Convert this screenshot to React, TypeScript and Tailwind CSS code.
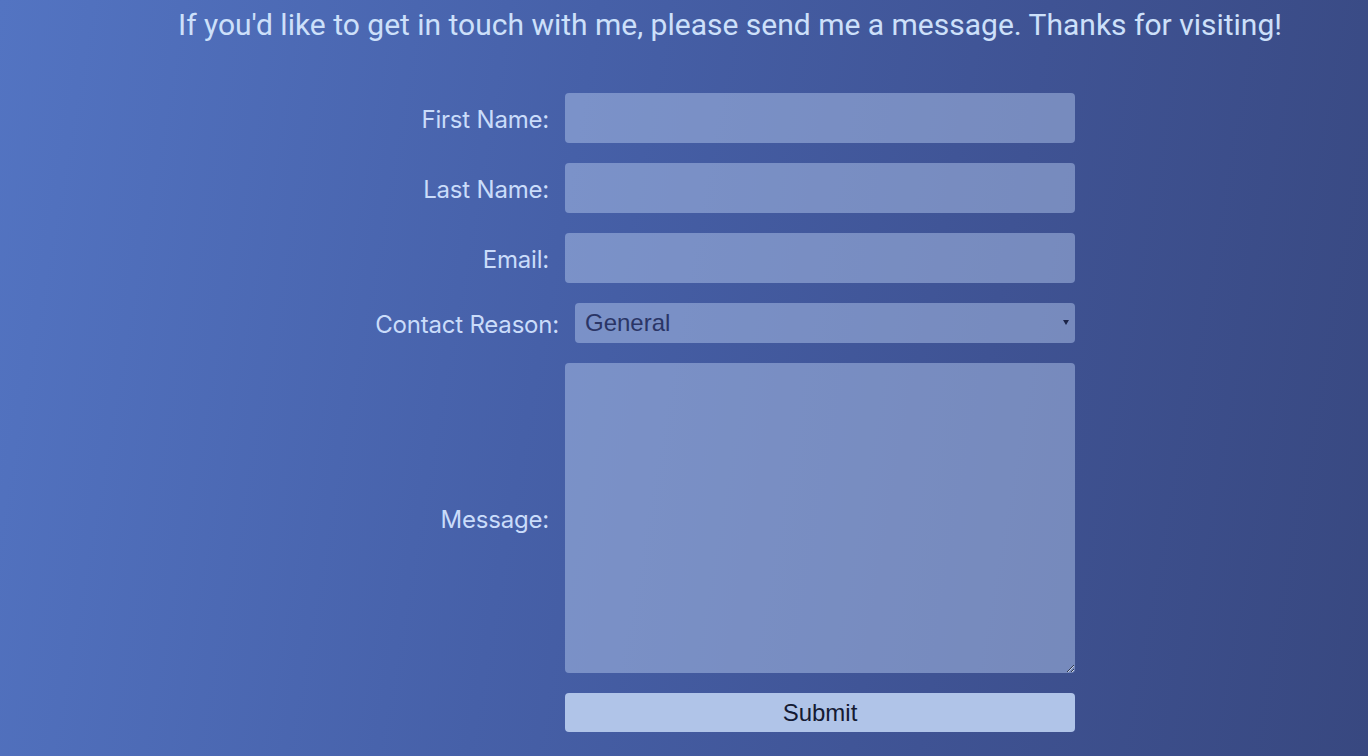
import React from "react";

export default function App() {
  const label =
    "w-[200px] shrink-0 text-right pt-[4px] text-[24px] text-[#cadcfa] font-['Inter','Roboto',sans-serif] tracking-[-0.2px]";
  const input =
    "w-[510px] h-[50px] rounded-[4px] bg-[rgba(176,196,234,0.5)] border-0 outline-none px-3 text-[20px] text-[#1e2850]";
  return (
    <div className="min-h-[756px] w-full bg-[linear-gradient(100deg,#5374c2_0%,#4660a8_40%,#3f5394_70%,#384880_100%)] font-['Roboto',sans-serif] overflow-hidden">
      <div className="pl-[92px] flex justify-center pt-[5px]">
        <h1 className="text-[30px] leading-[40px] text-[#cde0fa] font-['Roboto',sans-serif] font-normal">
          If you'd like to get in touch with me, please send me a message. Thanks for visiting!
        </h1>
      </div>
      <form
        className="ml-[349px] mt-[48px] flex flex-col gap-[20px]"
        onSubmit={(e) => e.preventDefault()}
      >
        <div className="flex items-center gap-[16px]">
          <label className={label}>First Name:</label>
          <input className={input} />
        </div>
        <div className="flex items-center gap-[16px]">
          <label className={label}>Last Name:</label>
          <input className={input} />
        </div>
        <div className="flex items-center gap-[16px]">
          <label className={label}>Email:</label>
          <input className={input} />
        </div>
        <div className="flex items-center gap-[16px] pl-[10px]">
          <label className={label}>Contact Reason:</label>
          <div className="relative w-[500px] h-[40px]">
            <select className="appearance-none w-full h-full rounded-[4px] bg-[rgba(176,196,234,0.5)] border-0 outline-none pl-[10px] text-[24px] text-[#2a3566] font-['Liberation_Sans',Arial,sans-serif]">
              <option>General</option>
            </select>
            <span className="pointer-events-none absolute right-[6px] top-[17px] w-0 h-0 border-l-[3px] border-r-[3px] border-t-[5px] border-l-transparent border-r-transparent border-t-[#1c2448]" />
          </div>
        </div>
        <div className="flex items-center gap-[16px]">
          <label className={label}>Message:</label>
          <textarea className="w-[510px] h-[310px] rounded-[4px] bg-[rgba(176,196,234,0.5)] border-0 outline-none p-3 text-[20px] text-[#1e2850]" />
        </div>
        <div className="flex items-center gap-[16px]">
          <div className="w-[200px] shrink-0" />
          <button
            type="submit"
            className="w-[510px] h-[39px] rounded-[4px] bg-[#b0c4e8] text-[24px] text-[#141a33] font-['Liberation_Sans',Arial,sans-serif]"
          >
            Submit
          </button>
        </div>
      </form>
    </div>
  );
}
